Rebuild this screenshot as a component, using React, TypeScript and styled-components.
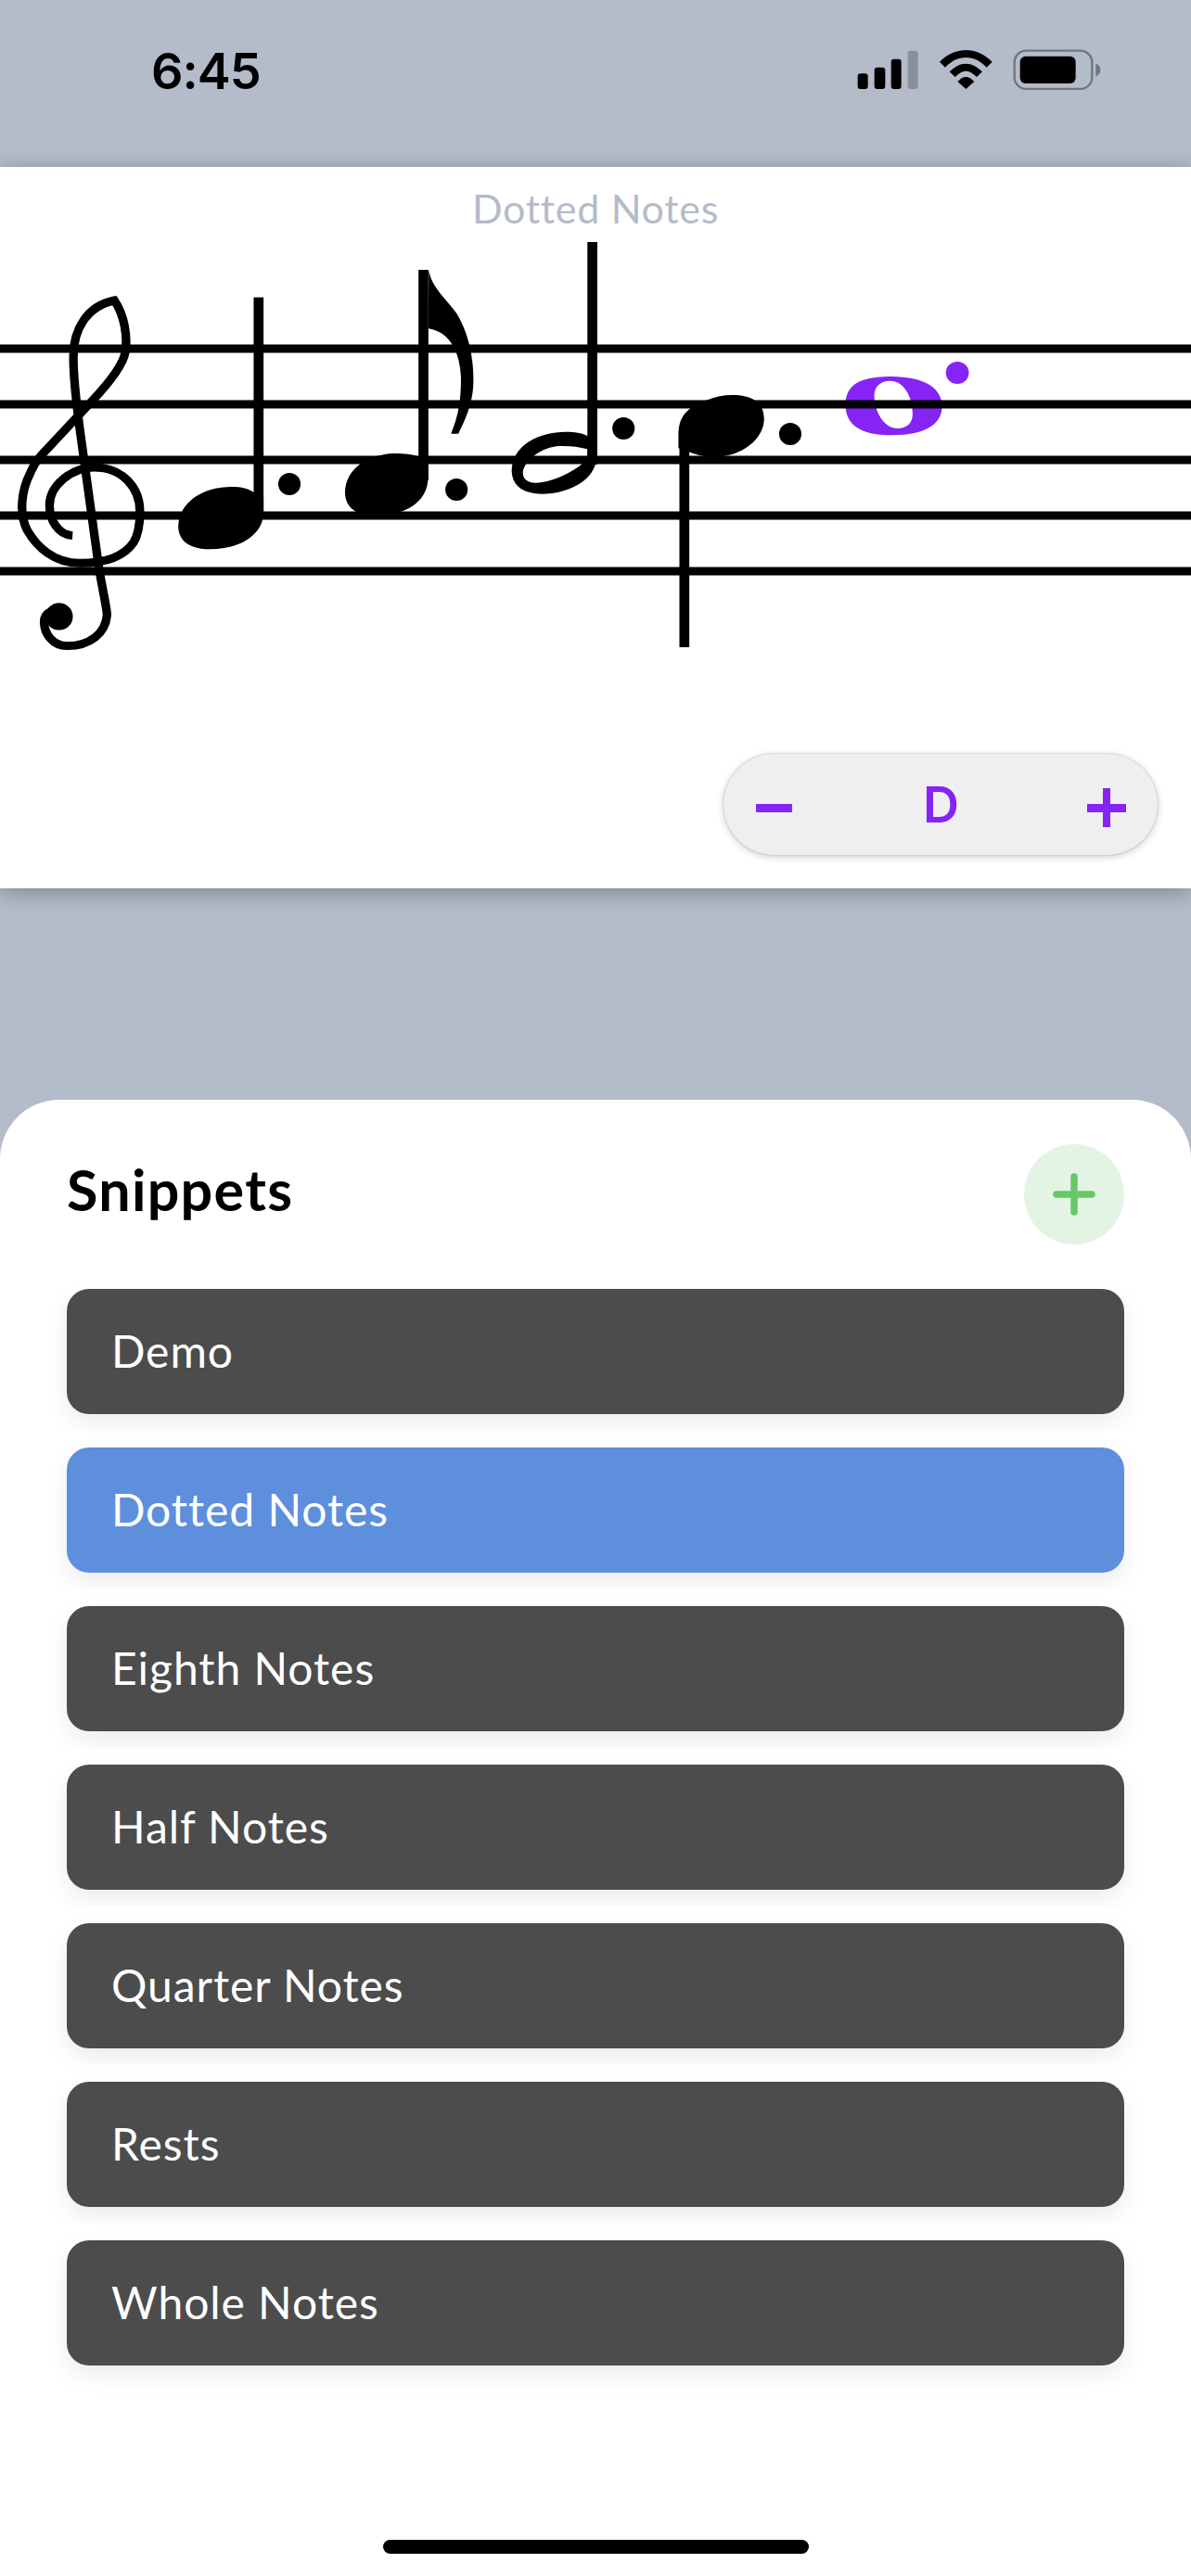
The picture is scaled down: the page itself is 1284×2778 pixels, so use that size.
import React from 'react';
import styled, { createGlobalStyle } from 'styled-components';

const snippets = ['Demo', 'Dotted Notes', 'Eighth Notes', 'Half Notes', 'Quarter Notes', 'Rests', 'Whole Notes'];
const activeSnippet = 'Dotted Notes';
const staffLines = [376, 436, 496, 556, 616];

function StatusIcons() {
  return (
    <svg width={266.67} height={45.33} viewBox='70 36 800 136'>
      <rect x='75' y='118' width='33' height='50' rx='9' fill='#000' />
      <rect x='129' y='98' width='35' height='70' rx='9' fill='#000' />
      <rect x='183' y='71' width='33' height='97' rx='9' fill='#000' />
      <rect x='237' y='44' width='33' height='124' rx='9' fill='#8a909b' />
      <path
        d='M340 80C365 55 395 42 425 42C455 42 485 55 510 80L492 98C470 76 450 66 425 66C400 66 380 76 358 98Z'
        fill='#000'
      />
      <path d='M372 112C390 95 405 86 425 86C445 86 460 95 478 112L460 129C448 118 438 110 425 110C412 110 402 118 390 129Z' fill='#000' />
      <path d='M398 144C408 135 415 129 425 129C435 129 442 135 452 144L425 168Z' fill='#000' />
      <rect x='582' y='44' width='251' height='124' rx='38' fill='none' stroke='#70757f' strokeWidth='7' />
      <rect x='600' y='62' width='180' height='88' rx='18' fill='#000' />
      <path d='M845 86C855 88 860 96 860 106C860 116 855 124 845 127Z' fill='#70757f' />
    </svg>
  );
}

function Score() {
  return (
    <StaffDrawing width={1284} height={470} viewBox='0 250 1284 470'>
      <g transform='translate(500 250) scale(0.3444 0.3333)'>
        <path
          fillRule='evenodd'
          fill='#8524f5'
          d='M1195 560C1195 510 1220 468 1335 468C1450 468 1497 510 1497 565C1497 620 1450 658 1340 658C1230 658 1195 615 1195 560ZM1285 530C1285 500 1305 482 1335 482C1375 482 1405 530 1405 590C1405 620 1385 636 1358 636C1315 636 1285 580 1285 530Z'
        />
        <ellipse cx='1545' cy='456' rx='36' ry='36' fill='#8524f5' />
      </g>
      {staffLines.map(y => (
        <rect key={y} x='0' y={y - 4.5} width='1284' height='9' fill='#000' />
      ))}
      <g transform='translate(0 250) scale(0.3444 0.3333)' fill='#000'>
        <path
          fill='none'
          stroke='#000'
          strokeWidth='27'
          d='M227 983C180 980 155 930 155 885C155 820 225 762 295 762C385 762 438 830 438 905C438 950 430 985 418 1005C385 1055 320 1072 250 1072C170 1072 115 1020 85 965C60 915 65 840 95 780C105 755 115 740 130 722L290 545C340 490 385 430 392 390C400 340 390 270 358 222C270 240 230 320 230 400C228 470 240 560 250 640L310 1090C325 1180 335 1220 335 1240C330 1300 280 1340 210 1340C165 1340 138 1300 138 1262C138 1245 145 1235 160 1228'
        />
        <ellipse cx='185' cy='1245' rx='43' ry='44' />
        <rect x='794' y='212' width='31' height='710' />
        <path d='M558 955C560 1005 600 1027 655 1027C745 1027 825 985 825 905L825 860L795 843C770 828 750 825 725 825C640 825 560 870 558 955Z' />
        <ellipse cx='906' cy='816' rx='35' ry='36' />
        <rect x='1310' y='123' width='31' height='680' />
        <path d='M1342 123C1350 180 1400 220 1430 265C1465 325 1482 400 1482 480C1482 550 1460 600 1435 653L1412 653C1432 600 1443 560 1443 470C1440 400 1415 325 1341 313Z' />
        <path d='M1080 845C1082 895 1120 919 1175 919C1265 919 1340 875 1340 795L1340 750L1310 727C1290 720 1265 717 1240 717C1155 717 1080 765 1080 845Z' />
        <ellipse cx='1429' cy='834' rx='35' ry='36' />
      </g>
      <g transform='translate(500 250) scale(0.3444 0.3333)' fill='#000'>
        <rect x='387' y='33' width='31' height='720' />
        <path
          fillRule='evenodd'
          d='M150 775C152 825 190 848 245 848C330 848 415 800 415 730L387 660C370 650 345 647 320 647C235 647 150 690 150 775ZM185 780C185 800 200 812 225 812C270 812 345 780 387 735L387 703C360 695 330 692 300 693C245 695 187 740 185 780Z'
        />
        <ellipse cx='500' cy='636' rx='35' ry='36' />
        <rect x='675' y='650' width='31' height='694' />
        <path d='M672 660C672 620 680 595 710 570C760 540 800 528 840 528C900 528 940 550 940 605C940 670 870 728 785 728C750 728 725 722 705 712L672 700Z' />
        <ellipse cx='1022' cy='654' rx='35' ry='36' />
      </g>
    </StaffDrawing>
  );
}

export default function App() {
  return (
    <Screen>
      <GlobalStyle />
      <StatusBar>
        <Clock>6:45</Clock>
        <StatusIcons />
      </StatusBar>
      <ScoreCard>
        <ScoreTitle>Dotted Notes</ScoreTitle>
        <Score />
        <PitchRow>
          <PitchControl>
            <MinusMark />
            <PitchName>D</PitchName>
            <PlusMark />
          </PitchControl>
        </PitchRow>
      </ScoreCard>
      <Sheet>
        <SheetHeader>
          <SheetTitle>Snippets</SheetTitle>
          <AddButton>
            <svg width='48' height='48' viewBox='0 0 48 48'>
              <path d='M24 5V43M5 24H43' stroke='#66c868' strokeWidth='7.5' strokeLinecap='round' fill='none' />
            </svg>
          </AddButton>
        </SheetHeader>
        <SnippetList>
          {snippets.map(name => (
            <SnippetItem key={name}>
              <SnippetRow $active={name === activeSnippet}>{name}</SnippetRow>
            </SnippetItem>
          ))}
        </SnippetList>
        <HomeIndicator />
      </Sheet>
    </Screen>
  );
}

const GlobalStyle = createGlobalStyle`
  html, body {
    margin: 0;
    padding: 0;
    background: #b4bbc9;
  }
  * {
    box-sizing: border-box;
  }
`;

const Screen = styled.div`
  width: 1284px;
  height: 2778px;
  display: flex;
  flex-direction: column;
  overflow: hidden;
  background: #b4bbc9;
  font-family: Lato, 'Liberation Sans', sans-serif;
`;

const StatusBar = styled.div`
  height: 180px;
  flex-shrink: 0;
  display: flex;
  justify-content: space-between;
  align-items: flex-start;
  padding: 52px 94px 0 163px;
`;

const Clock = styled.div`
  font-family: Inter, sans-serif;
  font-weight: 600;
  font-size: 54px;
  line-height: 50px;
  letter-spacing: -1px;
  color: #000;
`;

const ScoreCard = styled.section`
  height: 778px;
  flex-shrink: 0;
  background: #fff;
  box-shadow: 0 4px 22px rgba(0, 0, 0, 0.3);
`;

const ScoreTitle = styled.div`
  height: 70px;
  padding-top: 20px;
  text-align: center;
  font-weight: 400;
  font-size: 43px;
  line-height: 50px;
  letter-spacing: 0.7px;
  color: #b4bbc9;
`;

const StaffDrawing = styled.svg`
  display: block;
`;

const PitchRow = styled.div`
  display: flex;
  justify-content: flex-end;
  padding: 93px 36px 0 0;
`;

const PitchControl = styled.div`
  width: 468px;
  height: 109px;
  display: grid;
  grid-template-columns: 1fr auto 1fr;
  align-items: center;
  padding: 0 34px 0 35px;
  border-radius: 55px;
  background: #efefef;
  box-shadow: 0 0 2px rgba(0, 0, 0, 0.25), 0 2px 8px rgba(0, 0, 0, 0.2);
  color: #8524f5;
`;

const MinusMark = styled.span`
  justify-self: start;
  width: 39px;
  height: 9px;
  margin-top: 7px;
  background: #8524f5;
`;

const PitchName = styled.span`
  font-family: Inter, sans-serif;
  font-weight: 600;
  font-size: 54px;
  line-height: 54px;
`;

const PlusMark = styled.span`
  position: relative;
  justify-self: end;
  width: 42px;
  height: 42px;
  margin-top: 6px;

  &::before,
  &::after {
    content: '';
    position: absolute;
    background: #8524f5;
  }
  &::before {
    left: 0;
    right: 0;
    top: 17px;
    height: 9px;
  }
  &::after {
    top: 0;
    bottom: 0;
    left: 17px;
    width: 8px;
  }
`;

const Sheet = styled.section`
  height: 1592px;
  margin-top: auto;
  flex-shrink: 0;
  display: flex;
  flex-direction: column;
  padding: 48px 72px 24px;
  border-radius: 64px 64px 0 0;
  background: #fff;
`;

const SheetHeader = styled.header`
  display: flex;
  justify-content: space-between;
  align-items: center;
`;

const SheetTitle = styled.h2`
  margin: 0;
  padding-bottom: 10px;
  font-weight: 700;
  font-size: 61px;
  line-height: 70px;
  letter-spacing: 1.3px;
  color: #000;
`;

const AddButton = styled.div`
  width: 108px;
  height: 108px;
  display: flex;
  align-items: center;
  justify-content: center;
  border-radius: 50%;
  background: #e3f4e5;
`;

const SnippetList = styled.div`
  display: flex;
  flex-direction: column;
  gap: 18px;
  margin-top: 30px;
`;

const SnippetItem = styled.div`
  padding-top: 18px;
  background: #fff;
`;

const SnippetRow = styled.div<{ $active?: boolean }>`
  height: 135px;
  display: flex;
  align-items: center;
  padding: 0 0 2px 48px;
  border-radius: 24px;
  background: ${p => (p.$active ? '#5d8fdd' : '#4c4c4c')};
  box-shadow: 0 10px 26px rgba(0, 0, 0, 0.08);
  font-size: 48px;
  letter-spacing: 0.95px;
  color: #fff;
`;

const HomeIndicator = styled.div`
  width: 459px;
  height: 15px;
  margin: auto auto 0;
  border-radius: 8px;
  background: #000;
`;
